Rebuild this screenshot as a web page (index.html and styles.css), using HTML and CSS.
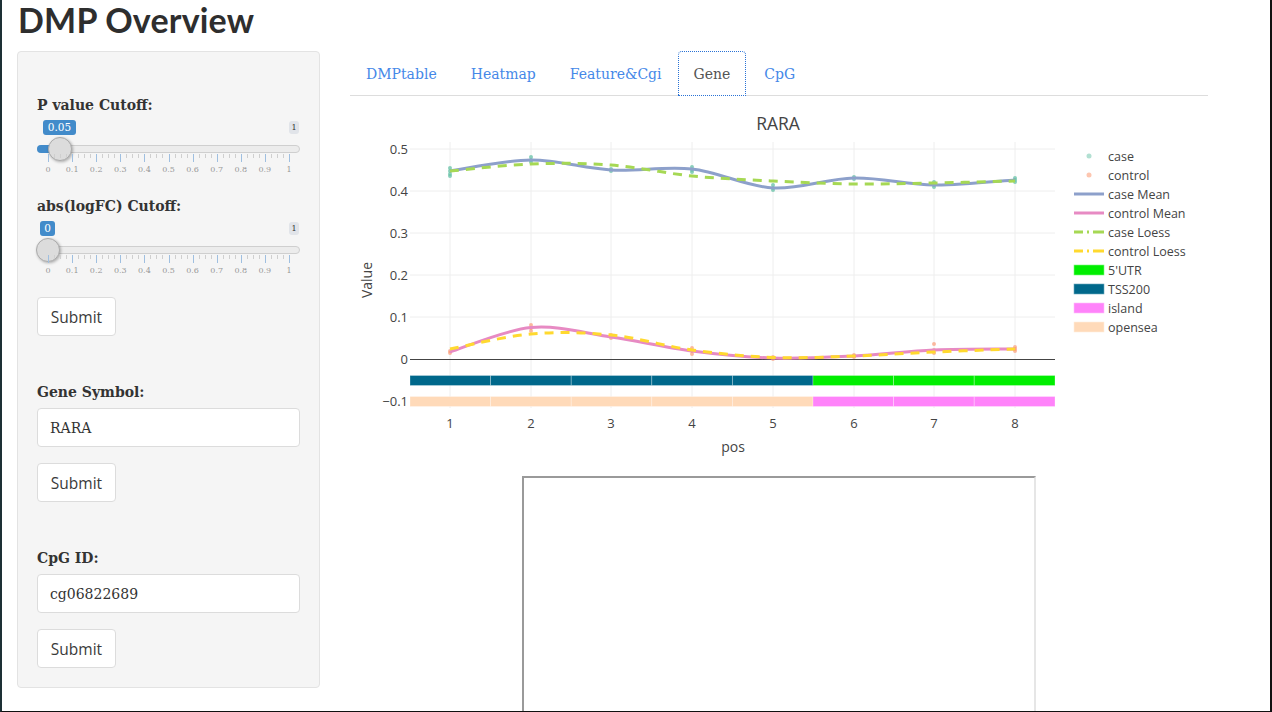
FILE: index.html
```html
<!DOCTYPE html>
<html>
<head>
<meta charset="utf-8">
<title>DMP Overview</title>
<link rel="stylesheet" href="styles.css">
</head>
<body>
<div class="frame">
  <h1 class="title">DMP Overview</h1>
  <div class="row">
    <aside class="sidebar">
      <label class="ctl-label lbl-first">P value Cutoff:</label>
      <div class="slider">
        <div class="track"></div>
        <div class="bar bar-p"></div>
        <div class="handle handle-p"></div>
        <span class="badge badge-p">0.05</span>
        <span class="badge-max">1</span>
        <div class="ticks"></div>
        <div class="grid-labels"><span>0</span><span>0.1</span><span>0.2</span><span>0.3</span><span>0.4</span><span>0.5</span><span>0.6</span><span>0.7</span><span>0.8</span><span>0.9</span><span>1</span></div>
      </div>
      <label class="ctl-label lbl-second">abs(logFC) Cutoff:</label>
      <div class="slider">
        <div class="track"></div>
        <div class="handle handle-fc"></div>
        <span class="badge badge-fc">0</span>
        <span class="badge-max">1</span>
        <div class="ticks"></div>
        <div class="grid-labels"><span>0</span><span>0.1</span><span>0.2</span><span>0.3</span><span>0.4</span><span>0.5</span><span>0.6</span><span>0.7</span><span>0.8</span><span>0.9</span><span>1</span></div>
      </div>
      <button class="btn btn-1">Submit</button>
      <label class="ctl-label lbl-section">Gene Symbol:</label>
      <input class="text-input" type="text" value="RARA">
      <button class="btn btn-2">Submit</button>
      <label class="ctl-label lbl-section">CpG ID:</label>
      <input class="text-input" type="text" value="cg06822689">
      <button class="btn btn-2">Submit</button>
    </aside>
    <main class="main">
      <ul class="tabs">
        <li class="tab"><a>DMPtable</a></li>
        <li class="tab"><a>Heatmap</a></li>
        <li class="tab"><a>Feature&amp;Cgi</a></li>
        <li class="tab active"><a>Gene</a></li>
        <li class="tab"><a>CpG</a></li>
      </ul>
      <svg class="plot" width="858" height="370" viewBox="350 96 858 370" xmlns="http://www.w3.org/2000/svg">
        <text class="ptitle" x="778" y="130" text-anchor="middle">RARA</text>
        <g class="grid">
          <line x1="410" x2="1055" y1="149" y2="149"/>
          <line x1="410" x2="1055" y1="191" y2="191"/>
          <line x1="410" x2="1055" y1="233" y2="233"/>
          <line x1="410" x2="1055" y1="275" y2="275"/>
          <line x1="410" x2="1055" y1="317" y2="317"/>
          <line x1="410" x2="1055" y1="401" y2="401"/>
          <line x1="450" x2="450" y1="142" y2="408"/>
          <line x1="531" x2="531" y1="142" y2="408"/>
          <line x1="611" x2="611" y1="142" y2="408"/>
          <line x1="692" x2="692" y1="142" y2="408"/>
          <line x1="773" x2="773" y1="142" y2="408"/>
          <line x1="854" x2="854" y1="142" y2="408"/>
          <line x1="934" x2="934" y1="142" y2="408"/>
          <line x1="1015" x2="1015" y1="142" y2="408"/>
        </g>
        <line class="zero" x1="410" x2="1055" y1="359.5" y2="359.5"/>
        <g class="bars">
          <rect x="410" y="375.5" width="80.6" height="10" fill="#00688b"/>
          <rect x="490.6" y="375.5" width="80.6" height="10" fill="#00688b"/>
          <rect x="571.2" y="375.5" width="80.6" height="10" fill="#00688b"/>
          <rect x="651.8" y="375.5" width="80.6" height="10" fill="#00688b"/>
          <rect x="732.4" y="375.5" width="80.6" height="10" fill="#00688b"/>
          <rect x="813" y="375.5" width="80.6" height="10" fill="#00ee00"/>
          <rect x="893.6" y="375.5" width="80.6" height="10" fill="#00ee00"/>
          <rect x="974.2" y="375.5" width="80.8" height="10" fill="#00ee00"/>
          <rect x="410" y="396.5" width="80.6" height="10" fill="#ffdab9"/>
          <rect x="490.6" y="396.5" width="80.6" height="10" fill="#ffdab9"/>
          <rect x="571.2" y="396.5" width="80.6" height="10" fill="#ffdab9"/>
          <rect x="651.8" y="396.5" width="80.6" height="10" fill="#ffdab9"/>
          <rect x="732.4" y="396.5" width="80.6" height="10" fill="#ffdab9"/>
          <rect x="813" y="396.5" width="80.6" height="10" fill="#ff83fa"/>
          <rect x="893.6" y="396.5" width="80.6" height="10" fill="#ff83fa"/>
          <rect x="974.2" y="396.5" width="80.8" height="10" fill="#ff83fa"/>
        </g>
        <g class="m-case">
          <circle cx="450" cy="168" r="2"/><circle cx="450" cy="171" r="2"/><circle cx="450" cy="174" r="2"/><circle cx="450" cy="176" r="2"/>
          <circle cx="531" cy="157" r="2"/><circle cx="531" cy="160" r="2"/><circle cx="531" cy="162" r="2"/>
          <circle cx="611" cy="169" r="2"/><circle cx="611" cy="171" r="2"/>
          <circle cx="692" cy="167" r="2"/><circle cx="692" cy="170" r="2"/><circle cx="692" cy="172" r="2"/>
          <circle cx="773" cy="185" r="2"/><circle cx="773" cy="188" r="2"/><circle cx="773" cy="190" r="2"/>
          <circle cx="854" cy="177" r="2"/><circle cx="854" cy="179" r="2"/>
          <circle cx="934" cy="182" r="2"/><circle cx="934" cy="185" r="2"/><circle cx="934" cy="187" r="2"/>
          <circle cx="1015" cy="178" r="2"/><circle cx="1015" cy="180" r="2"/><circle cx="1015" cy="182" r="2"/>
        </g>
        <g class="m-ctrl">
          <circle cx="450" cy="351" r="2"/><circle cx="450" cy="353" r="2"/>
          <circle cx="531" cy="325" r="2"/><circle cx="531" cy="328" r="2"/><circle cx="531" cy="331" r="2"/>
          <circle cx="611" cy="335" r="2"/><circle cx="611" cy="338" r="2"/>
          <circle cx="692" cy="348" r="2"/><circle cx="692" cy="351" r="2"/><circle cx="692" cy="354" r="2"/>
          <circle cx="773" cy="357" r="2"/><circle cx="773" cy="359" r="2"/>
          <circle cx="854" cy="355" r="2"/><circle cx="854" cy="357" r="2"/>
          <circle cx="934" cy="344" r="2"/><circle cx="934" cy="350" r="2"/><circle cx="934" cy="353" r="2"/>
          <circle cx="1015" cy="347" r="2"/><circle cx="1015" cy="349" r="2"/><circle cx="1015" cy="351" r="2"/>
        </g>
        <path class="c-case-mean" d="M450,171 C463.5,169.2 504.2,160.2 531,160 S584.2,168.5 611,170 S665,166 692,169 S746,186.5 773,188 S827,178.5 854,178 S907,184.7 934,185 S1001.5,180.8 1015,180"/>
        <path class="c-ctrl-mean" d="M450,352 C463.5,347.9 504.2,330 531,327.5 S584.2,333.1 611,337 S665,347.5 692,351 S746,357.2 773,358 S827,357.3 854,356 S907,351.2 934,350 S1001.5,349.2 1015,349"/>
        <path class="c-case-loess" d="M450,171 C463.5,169.8 504.2,165 531,164 S584.2,163 611,165 S665,173.3 692,176 S746,179.7 773,181 S827,183.7 854,184 S907,183.5 934,183 S1001.5,181.3 1015,181"/>
        <path class="c-ctrl-loess" d="M450,349 C463.5,346.5 504.2,336.3 531,334 S584.2,332.3 611,335 S665,346.3 692,350 S746,356.5 773,357.5 S827,356.9 854,356 S907,353.2 934,352 S1001.5,349.5 1015,349"/>
        <g class="ytick" text-anchor="end">
          <text x="408" y="154">0.5</text>
          <text x="408" y="196">0.4</text>
          <text x="408" y="238">0.3</text>
          <text x="408" y="280">0.2</text>
          <text x="408" y="322">0.1</text>
          <text x="408" y="364">0</text>
          <text x="408" y="406">−0.1</text>
        </g>
        <g class="xtick" text-anchor="middle">
          <text x="450" y="428">1</text>
          <text x="531" y="428">2</text>
          <text x="611" y="428">3</text>
          <text x="692" y="428">4</text>
          <text x="773" y="428">5</text>
          <text x="854" y="428">6</text>
          <text x="934" y="428">7</text>
          <text x="1015" y="428">8</text>
        </g>
        <text class="axtitle" x="733" y="452" text-anchor="middle">pos</text>
        <text class="axtitle" x="0" y="0" text-anchor="middle" transform="translate(372,280) rotate(-90)">Value</text>
        <g class="legend">
          <circle cx="1089" cy="156" r="2.5" fill="#66c2a5" opacity="0.5"/>
          <text x="1108" y="160.5">case</text>
          <circle cx="1089" cy="175" r="2.5" fill="#fc8d62" opacity="0.5"/>
          <text x="1108" y="179.5">control</text>
          <line x1="1074" x2="1104" y1="194" y2="194" stroke="#8da0cb" stroke-width="3"/>
          <text x="1108" y="198.5">case Mean</text>
          <line x1="1074" x2="1104" y1="213" y2="213" stroke="#e78ac3" stroke-width="3"/>
          <text x="1108" y="217.5">control Mean</text>
          <line x1="1074" x2="1104" y1="232" y2="232" stroke="#a6d854" stroke-width="3" stroke-dasharray="9,4,2,4,11"/>
          <text x="1108" y="236.5">case Loess</text>
          <line x1="1074" x2="1104" y1="251" y2="251" stroke="#ffd92f" stroke-width="3" stroke-dasharray="9,4,2,4,11"/>
          <text x="1108" y="255.5">control Loess</text>
          <rect x="1074" y="265" width="30" height="10" fill="#00ee00" stroke="#7df77d" stroke-width="0.6"/>
          <text x="1108" y="274.5">5'UTR</text>
          <rect x="1074" y="284" width="30" height="10" fill="#00688b" stroke="#6aa7bc" stroke-width="0.6"/>
          <text x="1108" y="293.5">TSS200</text>
          <rect x="1074" y="303" width="30" height="10" fill="#ff83fa" stroke="#ffc0fc" stroke-width="0.6"/>
          <text x="1108" y="312.5">island</text>
          <rect x="1074" y="322" width="30" height="10" fill="#ffdab9" stroke="#ffeddc" stroke-width="0.6"/>
          <text x="1108" y="331.5">opensea</text>
        </g>
      </svg>
      <div class="output-box"></div>
    </main>
  </div>
</div>
</body>
</html>
```
FILE: styles.css
```css
* { box-sizing: border-box; }
html, body { margin: 0; padding: 0; background: #fff; }
.frame {
  width: 1272px;
  height: 712px;
  overflow: hidden;
  border-left: 2px solid #1d3035;
  border-right: 2px solid #111;
  border-bottom: 1px solid #111;
  background: #fff;
  color: #333;
}
.title {
  font-family: Lato, "Open Sans", sans-serif;
  font-weight: 700;
  font-size: 34px;
  line-height: 40px;
  margin: 0 0 11px 16px;
  color: #2e2e2e;
  letter-spacing: 0.2px;
}
.row { display: flex; align-items: flex-start; }
.sidebar {
  margin-left: 15px;
  width: 303px;
  background: #f5f5f5;
  border: 1px solid #e3e3e3;
  border-radius: 4px;
  padding: 43px 19px 19px 19px;
  display: flex;
  flex-direction: column;
  align-items: flex-start;
}
.ctl-label {
  font-family: "DejaVu Serif", serif;
  font-weight: 700;
  font-size: 14px;
  line-height: 20px;
  height: 20px;
  color: #333;
  margin-bottom: 2px;
}
.lbl-second { margin-top: 19px; }
.lbl-section { margin-top: 46px; margin-bottom: 6px; }
.slider {
  position: relative;
  width: 263px;
  height: 60px;
}
.track {
  position: absolute;
  left: 0; right: 0;
  top: 28px;
  height: 8px;
  background: #ececec;
  border: 1px solid #cfcfcf;
  border-radius: 4px;
}
.bar {
  position: absolute;
  left: 0;
  top: 28px;
  height: 8px;
  background: #428bca;
  border-radius: 4px 0 0 4px;
}
.bar-p { width: 24px; }
.handle {
  position: absolute;
  top: 20px;
  width: 24px;
  height: 24px;
  border-radius: 50%;
  background: #dcdcdc;
  border: 1px solid #ababab;
  box-shadow: 1px 1px 3px rgba(0,0,0,0.3);
}
.handle-p { left: 11px; }
.handle-fc { left: -1px; }
.badge {
  position: absolute;
  top: 3px;
  height: 15px;
  line-height: 15px;
  background: #428bca;
  color: #fff;
  border-radius: 3px;
  font-family: "DejaVu Serif", serif;
  font-size: 10.5px;
  text-align: center;
}
.badge-p { left: 6px; width: 33px; }
.badge-fc { left: 3px; width: 15px; }
.badge-max {
  position: absolute;
  top: 4px;
  right: 1px;
  width: 10px;
  height: 13px;
  line-height: 13px;
  background: #e1e4e9;
  color: #333;
  border-radius: 3px;
  font-family: "DejaVu Serif", serif;
  font-size: 8px;
  text-align: center;
}
.ticks {
  position: absolute;
  left: 11px;
  width: 242px;
  top: 37px;
  height: 8px;
  background:
    repeating-linear-gradient(to right, #9fbfe0 0, #9fbfe0 1px, transparent 1px, transparent 24.1px) top left / 242px 8px no-repeat,
    repeating-linear-gradient(to right, #cfcfcf 0, #cfcfcf 1px, transparent 1px, transparent 6.025px) top left / 242px 4px no-repeat;
}
.grid-labels {
  position: absolute;
  left: -1px;
  width: 265px;
  top: 48px;
  display: grid;
  grid-template-columns: repeat(11, 1fr);
  font-family: "DejaVu Serif", serif;
  font-size: 8px;
  color: #999;
  text-align: center;
  line-height: 10px;
}
.btn {
  width: 79px;
  height: 39px;
  background: #fff;
  border: 1px solid #dcdcdc;
  border-radius: 4px;
  font-family: "Open Sans", Lato, sans-serif;
  font-size: 15.5px;
  color: #3a3a3a;
  padding: 0;
  text-align: center;
}
.btn-1 { margin-top: 19px; }
.btn-2 { margin-top: 16px; }
.text-input {
  width: 263px;
  height: 39px;
  background: #fff;
  border: 1px solid #dcdcdc;
  border-radius: 4px;
  padding: 0 12px;
  font-family: "DejaVu Serif", serif;
  font-size: 14px;
  color: #333;
}
.main {
  margin-left: 30px;
  width: 858px;
  display: flex;
  flex-direction: column;
}
.tabs {
  list-style: none;
  margin: 0;
  padding: 0;
  display: flex;
  border-bottom: 1px solid #ddd;
  height: 45px;
}
.tab {
  margin-right: 2px;
  height: 44px;
  border: 1px solid transparent;
  border-bottom: none;
  border-radius: 4px 4px 0 0;
}
.tab a {
  display: block;
  padding: 0 15px;
  line-height: 44px;
  font-family: "DejaVu Serif", serif;
  font-size: 14px;
  color: #4588e8;
}
.tab.active {
  margin-left: -2px;
  background: #fff;
  height: 45px;
  outline: 1px dotted #2a72d5;
  outline-offset: -1px;
}
.tab.active a { color: #555; }
.plot { display: block; }
.plot text { font-family: "Open Sans", sans-serif; fill: #444; }
.ptitle { font-size: 17.5px; }
.grid line { stroke: #eee; stroke-width: 1; }
.zero { stroke: #444; stroke-width: 1; }
.bars rect { stroke: rgba(255,255,255,0.35); stroke-width: 0.8; }
.m-case circle { fill: #66c2a5; opacity: 0.75; }
.m-ctrl circle { fill: #fc8d62; opacity: 0.6; }
.c-case-mean, .c-ctrl-mean, .c-case-loess, .c-ctrl-loess { fill: none; stroke-width: 3; }
.c-case-mean { stroke: #8da0cb; }
.c-ctrl-mean { stroke: #e78ac3; }
.c-case-loess { stroke: #a6d854; stroke-dasharray: 9,7; }
.c-ctrl-loess { stroke: #ffd92f; stroke-dasharray: 9,7; }
.ytick text, .xtick text { font-size: 13px; }
.axtitle { font-size: 14px; }
.legend text { font-size: 12.5px; }
.output-box {
  margin: 10px auto 0 auto;
  width: 514px;
  height: 300px;
  border-style: solid;
  border-width: 2px;
  border-color: #9a9a9a #e6e6e6 #e6e6e6 #9a9a9a;
  background: #fff;
}
```
